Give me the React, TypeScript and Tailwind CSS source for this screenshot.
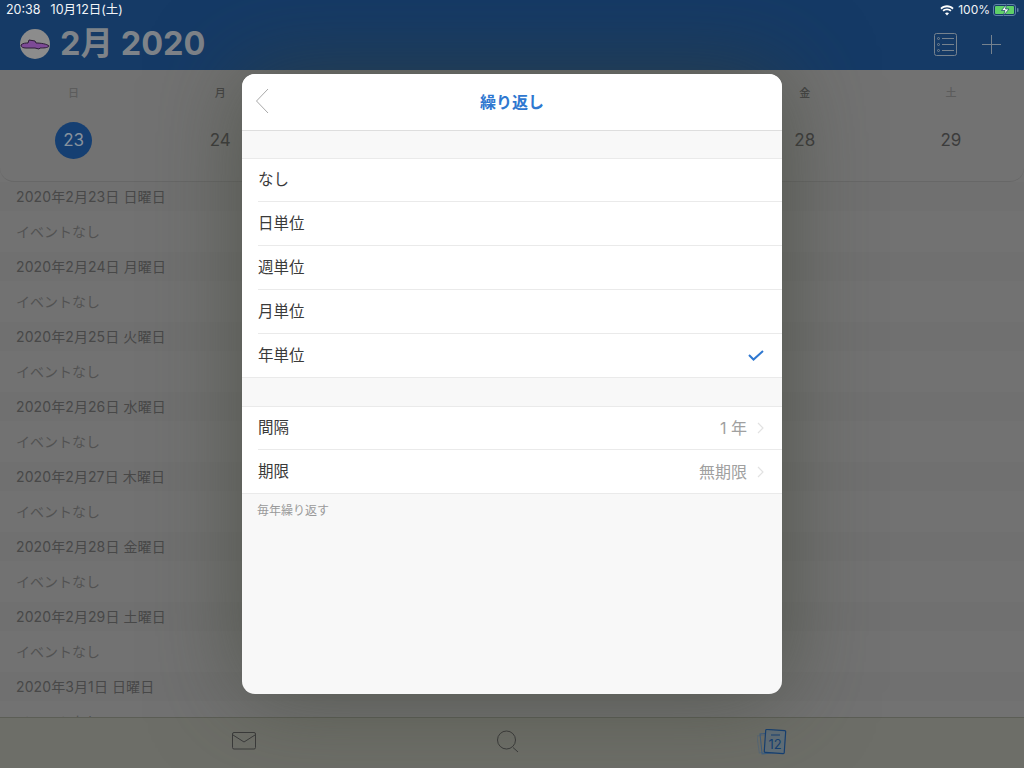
import React from 'react';

const FONT = "font-['Inter','Noto_Sans_CJK_JP',sans-serif]";

const weekDays = [
  { label: '日', date: '23', selected: true },
  { label: '月', date: '24' },
  { label: '火', date: '25' },
  { label: '水', date: '26' },
  { label: '木', date: '27' },
  { label: '金', date: '28' },
  { label: '土', date: '29' },
];

const agenda = [
  '2020年2月23日 日曜日',
  '2020年2月24日 月曜日',
  '2020年2月25日 火曜日',
  '2020年2月26日 水曜日',
  '2020年2月27日 木曜日',
  '2020年2月28日 金曜日',
  '2020年2月29日 土曜日',
  '2020年3月1日 日曜日',
];

const repeatOptions = ['なし', '日単位', '週単位', '月単位', '年単位'];

const StatusBar = () => (
  <div className="flex h-[20px] items-center justify-between pl-[6px] pr-[5px] text-[12.5px] text-[#f2f4f7]">
    <div className="flex gap-[10px]">
      <span>20:38</span>
      <span>10月12日(土)</span>
    </div>
    <div className="flex items-center gap-[3px]">
      <svg width="16" height="11" viewBox="0 0 15 11" fill="#fff">
        <path d="M7.5 2.2c2.1 0 4 .8 5.4 2.2l1.2-1.3C12.4 1.3 10 .3 7.5.3S2.6 1.3.9 3.1l1.2 1.3C3.5 3 5.4 2.2 7.5 2.2z" />
        <path d="M7.5 5.2c1.3 0 2.4.5 3.3 1.3l1.2-1.3c-1.2-1.1-2.8-1.8-4.5-1.8S4.200 4.100 3 5.200l1.200 1.300c.9-.8 2-1.300 3.300-1.300z" />
        <path d="M7.500 10.500l2-2.200c-.5-.5-1.200-.8-2-.8s-1.500.3-2 .8z" />
      </svg>
      <span className="text-[12px]">100%</span>
      <svg width="26" height="12" viewBox="0 0 26 12">
        <rect x="0.500" y="0.500" width="22" height="11" rx="2.500" fill="none" stroke="#5f81a6" />
        <rect x="2" y="2" width="19" height="8" rx="1" fill="#5fd068" />
        <path d="M13.500 0.500L8.500 6.500h3.500L10.500 11.500 16 5h-3.500z" fill="#fff" stroke="#153a66" strokeWidth="0.700" />
        <rect x="24" y="4" width="1.500" height="4" rx="0.700" fill="#5f81a6" />
      </svg>
    </div>
  </div>
);

const Header = () => (
  <div className="flex h-[50px] items-start justify-between pl-[20px] pr-[23px]">
    <div className="flex items-center gap-[10px] pt-[9px]">
      <div className="flex h-[30px] w-[30px] items-center justify-center rounded-full bg-[#8c8c8c]">
        <svg width="30" height="14" viewBox="0 0 30 14">
          <path
            d="M1 8c2-2 5-2 7-2L9 3l6 1 1 2c5 0 11 1 13 3-1 2-6 2-9 2l-1 1-4-1H6C3 11 1 10 1 8z"
            fill="#7d4a96"
            stroke="#2c1c36"
            strokeWidth="1"
          />
        </svg>
      </div>
      <span className="text-[32.5px] font-bold leading-[30px] text-[#7e8389]">2月 2020</span>
    </div>
    <div className="flex items-center gap-[25px] pt-[13px]">
      <svg width="23" height="23" viewBox="0 0 23 23" fill="none" stroke="#76828e" strokeWidth="1">
        <rect x="0.500" y="0.500" width="22" height="22" rx="2" />
        <circle cx="4.500" cy="5.500" r="1" />
        <circle cx="4.500" cy="11.500" r="1" />
        <circle cx="4.500" cy="17.500" r="1" />
        <path d="M8 5.500h12M8 11.500h12M8 17.500h12" />
      </svg>
      <svg width="19" height="19" viewBox="0 0 19 19" fill="none" stroke="#76828e" strokeWidth="1">
        <path d="M9.500 0v19M0 9.500h19" />
      </svg>
    </div>
  </div>
);

const WeekStrip = () => (
  <div className="grid h-[112px] grid-cols-7 rounded-b-[14px] border-b border-[#676767] bg-[#727272] pl-[1px]">
    {weekDays.map((d) => (
      <div key={d.label} className={`flex flex-col items-center pt-[15px] ${d.selected ? '-ml-[1px]' : ''}`}>
        <span className={`text-[11px] font-medium leading-[16px] ${d.label === '日' || d.label === '土' ? 'text-[#5c5c5c]' : 'text-[#444]'}`}>
          {d.label}
        </span>
        <span
          className={`mt-[21px] flex h-[37px] w-[37px] items-center justify-center rounded-full text-[17px] ${
            d.selected ? 'bg-[#153f72] text-[#87929d]' : 'text-[#3c3c3c]'
          }`}
        >
          {d.date}
        </span>
      </div>
    ))}
  </div>
);

const Agenda = () => (
  <div className="flex-1 overflow-hidden">
    {agenda.map((day) => (
      <div key={day}>
        <div className="flex h-[29px] items-center bg-[#707070] pl-[16px] text-[14px] tracking-[0.1px] text-[#484848]">{day}</div>
        <div className="flex h-[41px] items-center bg-[#727272] pl-[16px] text-[14px] text-[#525252]">イベントなし</div>
      </div>
    ))}
  </div>
);

const TabBar = () => (
  <div className="grid h-[51px] grid-cols-[466px_280px_1fr] border-t border-[#5c5e56] bg-[#6d6e68] pt-[12px]">
    <div className="flex justify-end pr-[210px]">
      <svg width="24" height="18" viewBox="0 0 24 18" fill="none" stroke="#3a3a3a" strokeWidth="1" className="mt-[2px]">
        <rect x="0.500" y="0.500" width="23" height="16.500" rx="1.500" />
        <path d="M1 3l11 7 11-7" />
      </svg>
    </div>
    <div className="pl-[30px]">
      <svg width="24" height="24" viewBox="0 0 24 24" fill="none" stroke="#3a3a3a" strokeWidth="1">
        <circle cx="10.500" cy="10" r="9" />
        <path d="M17 17.500l5 4.500" />
      </svg>
    </div>
    <div className="pl-[11px]">
      <svg width="30" height="26" viewBox="0 0 30 26" fill="none" stroke="#153f72" className="-mt-[1px]">
        <rect x="1" y="6" width="14" height="17" stroke="#586876" transform="rotate(-8 8 14)" />
        <rect x="4" y="4" width="18" height="20" stroke="#3b5c80" transform="rotate(-6 13 14)" />
        <rect x="8" y="1" width="20" height="23" rx="1" fill="#606e78" transform="rotate(4 18 12)" strokeWidth="1.200" />
        <path d="M14 6h9" />
        <text x="18" y="20" fontSize="13" textAnchor="middle" fill="#153f72" stroke="none">12</text>
      </svg>
    </div>
  </div>
);

const Row = ({ label, short, last, children }: { label: string; short?: boolean; last?: boolean; children?: React.ReactNode }) => (
  <div className={`flex items-center bg-white pl-[16px] ${short ? 'h-[43px]' : 'h-[44px]'}`}>
    <div className={`flex h-full flex-1 items-center justify-between pr-[18px] ${last ? '' : 'border-b border-[#eaeaea]'}`}>
      <span className="text-[15.5px] text-[#3a3a3a]">{label}</span>
      {children}
    </div>
  </div>
);

const DetailValue = ({ text }: { text: string }) => (
  <div className="flex items-center">
    <span className="text-[16px] text-[#a0a0a0]">{text}</span>
    <svg width="7" height="12" viewBox="0 0 7 12" fill="none" stroke="#e2e2e2" strokeWidth="1.200" className="ml-[10px]">
      <path d="M1 1l5 5-5 5" />
    </svg>
  </div>
);

const RepeatModal = () => (
  <div className="absolute left-[242px] top-[74px] flex h-[620px] w-[540px] flex-col overflow-hidden rounded-[13px] bg-[#f8f8f8] shadow-[0_0_90px_rgba(60,65,50,0.6)]">
    <div className="relative flex h-[57px] items-center justify-center border-b border-[#dedede] bg-white">
      <svg width="14" height="26" viewBox="0 0 14 26" fill="none" stroke="#a8a8a8" strokeWidth="1" className="absolute left-[13px] top-[14px]">
        <path d="M13 1L1.500 13 13 25" />
      </svg>
      <span className="text-[16px] font-bold text-[#2f78d0]">繰り返し</span>
    </div>
    <div className="mt-[27px] border-y border-[#eaeaea]">
      {repeatOptions.map((option, i) => (
        <Row key={option} label={option} short={i === 0 || i === repeatOptions.length - 1} last={i === repeatOptions.length - 1}>
          {option === '年単位' && (
            <svg width="16" height="11" viewBox="0 0 16 11" fill="none" stroke="#2f78d0" strokeWidth="2">
              <path d="M1 5l4.500 4.500L15 1" />
            </svg>
          )}
        </Row>
      ))}
    </div>
    <div className="mt-[28px] border-y border-[#eaeaea]">
      <Row label="間隔" short>
        <DetailValue text="1 年" />
      </Row>
      <Row label="期限" short last>
        <DetailValue text="無期限" />
      </Row>
    </div>
    <p className="pl-[15px] pt-[8px] text-[12px] text-[#9a9a9a]">毎年繰り返す</p>
  </div>
);

export default function App() {
  return (
    <div className={`relative flex h-[768px] w-[1024px] flex-col overflow-hidden bg-[#727272] ${FONT}`}>
      <div className="bg-[#153a66]">
        <StatusBar />
        <Header />
      </div>
      <WeekStrip />
      <Agenda />
      <TabBar />
      <RepeatModal />
    </div>
  );
}
